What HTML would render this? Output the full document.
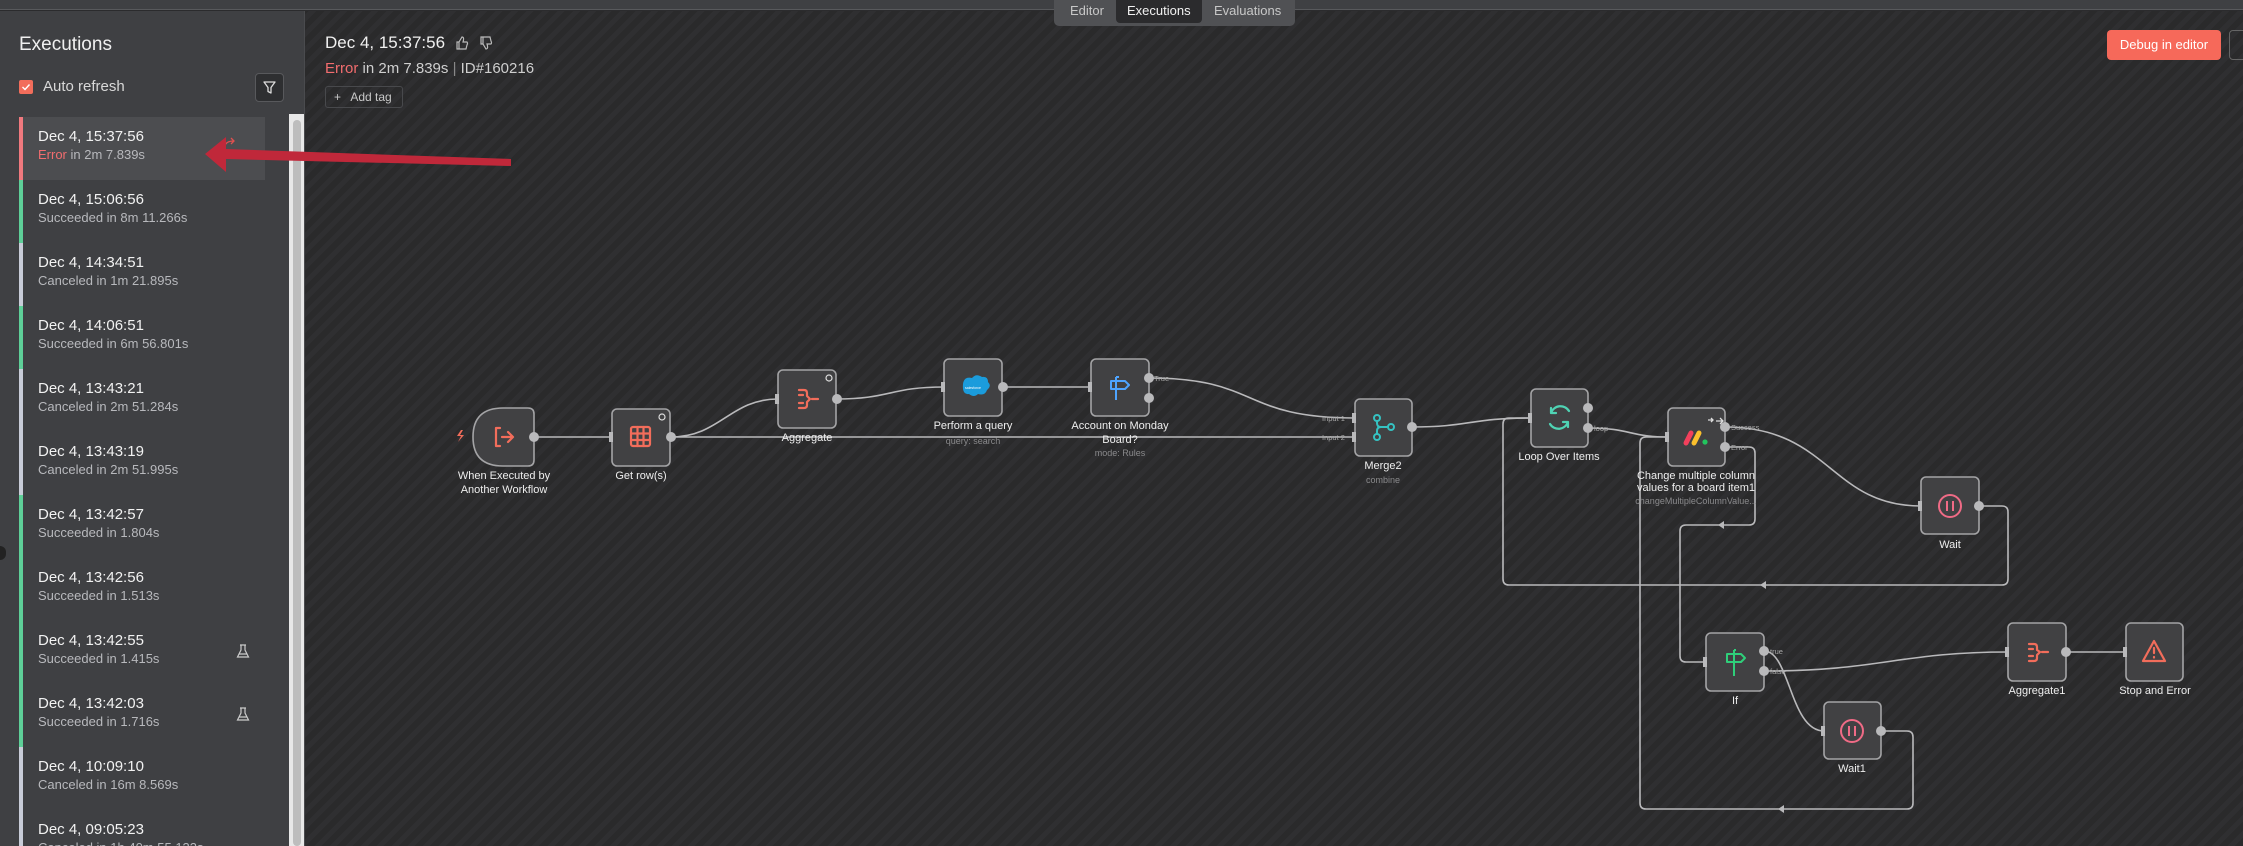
<!DOCTYPE html>
<html><head><meta charset="utf-8"><style>
*{margin:0;padding:0;box-sizing:border-box}
html,body{width:2243px;height:846px;overflow:hidden}
body{background:#2b2b2d;font-family:"Liberation Sans",sans-serif;position:relative}
#top{position:absolute;left:0;top:0;width:2243px;height:10px;background:#3f4043;border-bottom:1px solid #58595c}
#canvas{position:absolute;left:305px;top:11px;right:0;bottom:0;background:repeating-linear-gradient(-45deg,#2a2a2b 0 6px,#2f2f31 6px 11px)}
#side{position:absolute;left:0;top:11px;width:305px;height:835px;background:#3f4043;border-right:1px solid #4a4b4e;overflow:hidden}
.t{position:absolute;color:#f0f0f0}
.item{position:absolute;left:19px;width:246px;height:63px;border-left:4px solid #5ecf98}
.item .a{position:absolute;left:15px;top:11px;font-size:15px;color:#f2f2f2}
.item .b{position:absolute;left:15px;top:30px;font-size:13px;color:#b8b9bd}
.tabs{position:absolute;left:1054px;top:0;width:241px;height:26px;background:#505154;border-radius:0 0 5px 5px;font-size:13px;color:#c8c8c8}
.tabs span{position:absolute;top:3px}
</style></head><body>
<div id="top"></div>
<div id="canvas"></div>
<div id="side">
 <div class="t" style="left:19px;top:23px;font-size:19px">Executions</div>
 <div style="position:absolute;left:19px;top:69px;width:14px;height:14px;background:#f26d5b;border-radius:2px"><svg width="14" height="14"><path d="M3.5 7 L6 9.5 L10.5 4.5" stroke="#fff" stroke-width="1.4" fill="none"/></svg></div>
 <div class="t" style="left:43px;top:67px;font-size:15px;color:#d8d8d8">Auto refresh</div>
 <div style="position:absolute;left:255px;top:62px;width:29px;height:29px;border:1px solid #58595c;background:#2e2f31;border-radius:4px"><svg width="27" height="27"><path d="M8 8 H19 L15 13.5 V19 L12 17.5 V13.5 Z" stroke="#ddd" stroke-width="1.3" fill="none" stroke-linejoin="round"/></svg></div>
 <div style="position:absolute;left:289px;top:103px;width:15px;height:732px;background:#e8e8e8"><div style="position:absolute;left:4px;top:6px;width:8px;height:726px;background:#bdbdbd;border-radius:4px"></div></div>
 <div class="item" style="top:106px;border-color:#f0797e;background:#4c4d50"><div class="a">Dec 4, 15:37:56</div><div class="b"><span style="color:#f26d6f">Error</span> in 2m 7.839s</div><svg style="position:absolute;left:200px;top:20px" width="14" height="10"><path d="M2 9 Q3 4 11 4 M8 1 L11 4 L8 7" stroke="#e0504f" stroke-width="1.3" fill="none"/></svg></div>
 <div class="item" style="top:169px"><div class="a">Dec 4, 15:06:56</div><div class="b">Succeeded in 8m 11.266s</div></div>
 <div class="item" style="top:232px;border-color:#c8ccd8"><div class="a">Dec 4, 14:34:51</div><div class="b">Canceled in 1m 21.895s</div></div>
 <div class="item" style="top:295px"><div class="a">Dec 4, 14:06:51</div><div class="b">Succeeded in 6m 56.801s</div></div>
 <div class="item" style="top:358px;border-color:#c8ccd8"><div class="a">Dec 4, 13:43:21</div><div class="b">Canceled in 2m 51.284s</div></div>
 <div class="item" style="top:421px;border-color:#c8ccd8"><div class="a">Dec 4, 13:43:19</div><div class="b">Canceled in 2m 51.995s</div></div>
 <div class="item" style="top:484px"><div class="a">Dec 4, 13:42:57</div><div class="b">Succeeded in 1.804s</div></div>
 <div class="item" style="top:547px"><div class="a">Dec 4, 13:42:56</div><div class="b">Succeeded in 1.513s</div></div>
 <div class="item" style="top:610px"><div class="a">Dec 4, 13:42:55</div><div class="b">Succeeded in 1.415s</div><svg style="position:absolute;left:213px;top:22px" width="14" height="16"><path d="M5 2 V7 L1.5 14 H12.5 L9 7 V2 M4 2 H10 M3 11 H11" stroke="#ccc" stroke-width="1.2" fill="none"/></svg></div>
 <div class="item" style="top:673px"><div class="a">Dec 4, 13:42:03</div><div class="b">Succeeded in 1.716s</div><svg style="position:absolute;left:213px;top:22px" width="14" height="16"><path d="M5 2 V7 L1.5 14 H12.5 L9 7 V2 M4 2 H10 M3 11 H11" stroke="#ccc" stroke-width="1.2" fill="none"/></svg></div>
 <div class="item" style="top:736px;border-color:#c8ccd8"><div class="a">Dec 4, 10:09:10</div><div class="b">Canceled in 16m 8.569s</div></div>
 <div class="item" style="top:799px;border-color:#c8ccd8"><div class="a">Dec 4, 09:05:23</div><div class="b">Canceled in 1h 40m 55.133s</div></div>
</div>
<div style="position:absolute;left:-6px;top:546px;width:12px;height:14px;border-radius:6px;background:#222"></div>
<div class="tabs"><span style="left:16px">Editor</span><span style="left:62px;top:0;height:23px;width:86px;background:#2b2b2d;border-radius:0 0 4px 4px;color:#f2f2f2;padding:3px 0 0 11px">Executions</span><span style="left:160px">Evaluations</span></div>
<div class="t" style="left:325px;top:33px;font-size:17px">Dec 4, 15:37:56</div>
<svg style="position:absolute;left:455px;top:35px" width="40" height="16"><path d="M2 7 H4 V14 H2 Z M4 7 L7 2 Q9 2 8.5 5 L8 7 H12 Q13 8 12 10 L11 14 H4" stroke="#bbb" stroke-width="1.2" fill="none"/><path d="M26 9 H28 V2 H26 Z M28 9 L31 14 Q33 14 32.5 11 L32 9 H36 Q37 8 36 6 L35 2 H28" stroke="#bbb" stroke-width="1.2" fill="none"/></svg>
<div class="t" style="left:325px;top:60px;font-size:15px;color:#cfcfcf"><span style="color:#f26d6f">Error</span> in 2m 7.839s <span style="color:#888">|</span> ID#160216</div>
<div style="position:absolute;left:325px;top:86px;width:78px;height:22px;border:1px solid #48494c;border-radius:3px;font-size:12px;color:#c8c8c8;padding:3px 0 0 8px">+&nbsp;&nbsp; Add tag</div>
<div style="position:absolute;left:2107px;top:30px;width:114px;height:30px;background:#f6695a;border-radius:4px;color:#fff;font-size:13px;text-align:center;line-height:30px">Debug in editor</div>
<div style="position:absolute;left:2229px;top:30px;width:20px;height:30px;border:1px solid #666;border-radius:4px"></div>

<svg style="position:absolute;left:0;top:0" width="2243" height="846" font-family="Liberation Sans, sans-serif">
<g stroke="#b9b9bb" stroke-width="1.6" fill="none">
<path d="M534 437 H612"/>
<path d="M671 437 C720 437 730 399 778 399"/>
<path d="M671 437 H1355"/>
<path d="M837 399 C890 399 890 387 944 387"/>
<path d="M1003 387 H1091"/>
<path d="M1149 378 C1260 378 1240 418 1355 418"/>
<path d="M1412 427 C1470 427 1470 418 1531 418"/>
<path d="M1588 428 C1630 428 1630 437 1668 437"/>
<path d="M1725 427 C1830 427 1830 506 1921 506"/>
<path d="M1725 447 H1749 Q1755 447 1755 453 V519 Q1755 525 1749 525 H1686 Q1680 525 1680 531 V656 Q1680 662 1686 662 H1706"/>
<path d="M1979 506 H2002 Q2008 506 2008 512 V579 Q2008 585 2002 585 H1509 Q1503 585 1503 579 V424 Q1503 418 1509 418 H1531"/>
<path d="M1764 651 C1790 651 1790 731 1824 731"/>
<path d="M1764 671 C1880 671 1900 652 2008 652"/>
<path d="M1881 731 H1907 Q1913 731 1913 737 V803 Q1913 809 1907 809 H1646 Q1640 809 1640 803 V443 Q1640 437 1646 437 H1668"/>
<path d="M2066 652 H2126"/>
</g>
<g fill="#b9b9bb"><path d="M1718 525 l6 -4 v8z"/><path d="M1760 585 l6 -4 v8z"/><path d="M1778 809 l6 -4 v8z"/></g>
<g fill="#414143" stroke="#a4a4a6" stroke-width="1.6">
<path d="M503 408 H528 Q534 408 534 414 V460 Q534 466 528 466 H503 Q473 466 473 437 Q473 408 503 408Z"/>
<rect x="612" y="409" width="58" height="57" rx="5"/>
<rect x="778" y="370" width="58" height="58" rx="5"/>
<rect x="944" y="359" width="58" height="57" rx="5"/>
<rect x="1091" y="359" width="58" height="57" rx="5"/>
<rect x="1355" y="399" width="57" height="57" rx="5"/>
<rect x="1531" y="389" width="57" height="58" rx="5"/>
<rect x="1668" y="408" width="57" height="58" rx="5"/>
<rect x="1921" y="477" width="58" height="57" rx="5"/>
<rect x="1706" y="633" width="58" height="58" rx="5"/>
<rect x="1824" y="702" width="57" height="57" rx="5"/>
<rect x="2008" y="623" width="58" height="58" rx="5"/>
<rect x="2126" y="623" width="57" height="58" rx="5"/>
</g>
<g fill="#b9b9bb">
<circle cx="534" cy="437" r="5"/><circle cx="671" cy="437" r="5"/><circle cx="837" cy="399" r="5"/><circle cx="1003" cy="387" r="5"/>
<circle cx="1149" cy="378" r="5"/><circle cx="1149" cy="398" r="5"/><circle cx="1412" cy="427" r="5"/>
<circle cx="1588" cy="408" r="5"/><circle cx="1588" cy="428" r="5"/><circle cx="1725" cy="427" r="5"/><circle cx="1725" cy="447" r="5"/>
<circle cx="1979" cy="506" r="5"/><circle cx="1764" cy="651" r="5"/><circle cx="1764" cy="671" r="5"/><circle cx="1881" cy="731" r="5"/><circle cx="2066" cy="652" r="5"/>
<rect x="609" y="432" width="4" height="10"/><rect x="775" y="394" width="4" height="10"/><rect x="941" y="382" width="4" height="10"/><rect x="1088" y="382" width="4" height="10"/>
<rect x="1352" y="413" width="4" height="10"/><rect x="1352" y="432" width="4" height="10"/><rect x="1528" y="413" width="4" height="10"/><rect x="1665" y="432" width="4" height="10"/>
<rect x="1918" y="501" width="4" height="10"/><rect x="1703" y="657" width="4" height="10"/><rect x="1821" y="726" width="4" height="10"/><rect x="2005" y="647" width="4" height="10"/><rect x="2123" y="647" width="4" height="10"/>
</g>
<path d="M461 430 l-4 6 h4 l-3 6 l6 -7 h-4 l3 -5z" fill="#f26d5b"/>
<circle cx="829" cy="378" r="3" fill="none" stroke="#ddd" stroke-width="1.2"/>
<circle cx="662" cy="417" r="3" fill="none" stroke="#ddd" stroke-width="1.2"/>
<g stroke="#f26d5b" stroke-width="2.2" fill="none" stroke-linecap="round" stroke-linejoin="round">
<path d="M500 428 H496 V446 H500 M502 437 H512 M508 432 L513 437 L508 442"/>
<rect x="631" y="427" width="19" height="19" rx="2"/><path d="M631 433.5 H650 M631 440 H650 M637.5 427 V446 M643.5 427 V446"/>
<path d="M799 390 H804 Q807 390 807 393 V396 L810 399 L807 402 V405 Q807 408 804 408 H799 M799 395 H803 M799 403 H803 M812 399 H818"/>
<path d="M2029 644 H2034 Q2037 644 2037 647 V650 L2040 652 L2037 655 V658 Q2037 661 2034 661 H2029 M2029 649 H2033 M2029 656 H2033 M2042 652 H2048"/>
<path d="M2154 641 L2165 661 H2143 Z M2154 648 V653 M2154 657 V657.5"/>
</g>
<path d="M963 384 q1 -8 9 -6 q4 -5 10 -1 q6 -1 6 5 q4 4 -1 8 q-2 6 -9 4 q-4 4 -9 0 q-7 1 -6 -10z" fill="#1b9cdc"/>
<text x="973" y="389" font-size="3.5" fill="#fff" text-anchor="middle">salesforce</text>
<g stroke="#4ea4ff" stroke-width="2" fill="none" stroke-linejoin="round"><path d="M1116 377 V400 M1111 381 H1125 L1129 385 L1125 389 H1111 Z M1116 377 H1119"/></g>
<g stroke="#35c2c2" stroke-width="2" fill="none"><circle cx="1377" cy="418" r="3"/><circle cx="1377" cy="437" r="3"/><circle cx="1391" cy="427" r="3"/><path d="M1377 421 V423 Q1377 427 1381 427 H1388 M1377 434 V431 Q1377 427 1381 427"/></g>
<g stroke="#4fd3b4" stroke-width="2.2" fill="none" stroke-linecap="round"><path d="M1569 411 A10 10 0 0 0 1551 413 M1551 413 v-5 M1551 413 h5 M1550 424 A10 10 0 0 0 1568 422 M1568 422 v5 M1568 422 h-5"/></g>
<g stroke-width="5" stroke-linecap="round"><path d="M1686 443 L1691 433" stroke="#f2405c"/><path d="M1694 443 L1699 433" stroke="#fbc02d"/></g><circle cx="1705" cy="442" r="2.6" fill="#22c55e"/>
<path d="M1708 420 h5 M1711 418 l2 2 l-2 2 M1716 421 h6 M1720 418 l3 3 l-3 3" stroke="#ddd" stroke-width="1.3" fill="none"/>
<g stroke="#f06b86" stroke-width="2" fill="none"><circle cx="1950" cy="506" r="11"/><path d="M1947 501 V511 M1953 501 V511"/><circle cx="1852" cy="731" r="11"/><path d="M1849 726 V736 M1855 726 V736"/></g>
<g stroke="#2fcf7a" stroke-width="2" fill="none" stroke-linejoin="round"><path d="M1734 650 V676 M1727 654 H1741 L1745 658 L1741 662 H1727 Z M1734 650 H1736"/></g>
<g fill="#eee" font-size="11" text-anchor="middle">
<text x="504" y="479">When Executed by</text><text x="504" y="493">Another Workflow</text>
<text x="641" y="479">Get row(s)</text>
<text x="807" y="441">Aggregate</text>
<text x="973" y="429">Perform a query</text>
<text x="1120" y="429">Account on Monday</text><text x="1120" y="443">Board?</text>
<text x="1383" y="469">Merge2</text>
<text x="1559" y="460">Loop Over Items</text>
<text x="1696" y="479">Change multiple column</text><text x="1696" y="491">values for a board item1</text>
<text x="1950" y="548">Wait</text>
<text x="1735" y="704">If</text>
<text x="1852" y="772">Wait1</text>
<text x="2037" y="694">Aggregate1</text>
<text x="2155" y="694">Stop and Error</text>
</g>
<g fill="#8a8a8c" font-size="9" text-anchor="middle">
<text x="973" y="444">query: search</text><text x="1120" y="456">mode: Rules</text><text x="1383" y="483">combine</text><text x="1696" y="504">changeMultipleColumnValue...</text>
</g>
<g fill="#aaa" font-size="7.5">
<text x="1154" y="381">True</text><text x="1322" y="421">Input 1</text><text x="1322" y="440">Input 2</text><text x="1594" y="431">loop</text>
<text x="1731" y="430">Success</text><text x="1731" y="450">Error</text><text x="1770" y="654">true</text><text x="1770" y="674">false</text>
</g>
<path d="M511 159 L226 149 L226 137 L205 154 L226 172 L226 159 L511 166 Z" fill="#c0283a"/>
</svg>
</body></html>
